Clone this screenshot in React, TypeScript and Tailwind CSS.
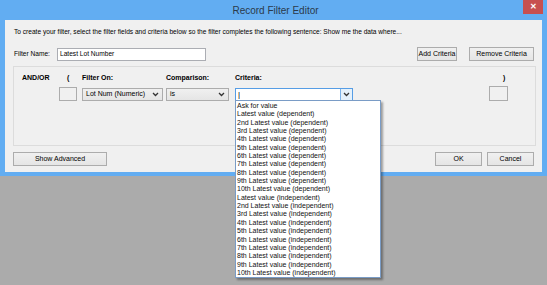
import React from "react";

const criteriaOptions = [
  "Ask for value",
  "Latest value (dependent)",
  "2nd Latest value (dependent)",
  "3rd Latest value (dependent)",
  "4th Latest value (dependent)",
  "5th Latest value (dependent)",
  "6th Latest value (dependent)",
  "7th Latest value (dependent)",
  "8th Latest value (dependent)",
  "9th Latest value (dependent)",
  "10th Latest value (dependent)",
  "Latest value (independent)",
  "2nd Latest value (independent)",
  "3rd Latest value (independent)",
  "4th Latest value (independent)",
  "5th Latest value (independent)",
  "6th Latest value (independent)",
  "7th Latest value (independent)",
  "8th Latest value (independent)",
  "9th Latest value (independent)",
  "10th Latest value (independent)",
];

function Chevron() {
  return (
    <svg width="7" height="5" viewBox="0 0 7 5" className="shrink-0">
      <polyline
        points="1,1 3.5,3.5 6,1"
        fill="none"
        stroke="#333"
        strokeWidth="1.3"
      />
    </svg>
  );
}

function Button({
  label,
  className = "",
}: {
  label: string;
  className?: string;
}) {
  return (
    <div
      className={`flex items-center justify-center border border-[#acacac] bg-gradient-to-b from-[#f0f0f0] to-[#e5e5e5] text-[7px] ${className}`}
    >
      {label}
    </div>
  );
}

function Select({ value, className = "" }: { value: string; className?: string }) {
  return (
    <div
      className={`flex h-[13px] items-center justify-between border border-[#acacac] bg-gradient-to-b from-[#f0f0f0] to-[#e5e5e5] pl-[3px] pr-[3px] text-[7px] ${className}`}
    >
      <span>{value}</span>
      <Chevron />
    </div>
  );
}

function FilterTable() {
  return (
    <div className="mr-[6px] mt-[5px] h-[80px] border border-[#dcdcdc]">
      <div className="grid grid-cols-[45px_23px_84px_69px_254px_1fr] pt-[6px] text-[7px] font-bold leading-[9px]">
        <span className="pl-[8px]">AND/OR</span>
        <span className="pl-[8px]">(</span>
        <span>Filter On:</span>
        <span>Comparison:</span>
        <span>Criteria:</span>
        <span className="pl-[14px]">)</span>
      </div>
      <div className="mt-[4px] grid grid-cols-[45px_23px_84px_69px_254px_1fr] items-end">
        <span />
        <div className="h-[14px] w-[18px] border border-[#acacac] bg-[#f0f0f0]" />
        <Select value="Lot Num (Numeric)" className="w-[81px]" />
        <Select value="is" className="w-[63px]" />
        <div className="flex h-[13px] w-[118px] items-stretch border border-[#569de5] bg-white">
          <span className="flex-1 pl-[2px] text-[8px] leading-[11px]">|</span>
          <div className="flex w-[12px] items-center justify-center border-l border-[#7eb4ea] bg-[#e5f1fb]">
            <Chevron />
          </div>
        </div>
        <div className="h-[15px] w-[19px] border border-[#acacac] bg-[#f0f0f0]" />
      </div>
    </div>
  );
}

function CriteriaList() {
  return (
    <div className="absolute left-[235px] top-[100px] w-[146px] border border-[#7a9cc6] bg-white pl-[1px] pt-[1px] shadow-[2px_2px_2px_rgba(0,0,0,0.35)]">
      {criteriaOptions.map((option) => (
        <div key={option} className="h-[8.35px] text-[7px] leading-[8.35px] text-[#111]">
          {option}
        </div>
      ))}
    </div>
  );
}

export default function App() {
  return (
    <div className="relative h-[285px] w-[547px] overflow-hidden bg-[#ababab] font-['Liberation_Sans',Arial,sans-serif] text-black">
      <div className="bg-[#62adf2] px-[5px] pb-[4px]">
        <div className="relative flex h-[20px] items-center justify-center">
          <span className="pl-[4px] text-[10px] text-[#2b3a4a]">Record Filter Editor</span>
          <div className="absolute right-[-1px] top-0 flex h-[14px] w-[20px] items-center justify-center bg-[#c75050] text-[8px] font-bold text-white">
            ✕
          </div>
        </div>
        <div className="h-[152px] bg-[#f0f0f0] pl-[8px]">
          <p className="pl-[1px] pt-[7px] text-[6.6px] leading-[9px]">
            To create your filter, select the filter fields and criteria below so the filter completes the following sentence: Show me the data where...
          </p>
          <div className="mt-[11px] flex items-center">
            <span className="w-[44px] pl-[1px] text-[6.6px]">Filter Name:</span>
            <div className="flex h-[13px] w-[149px] items-center border border-[#abadb3] bg-white pl-[2px] text-[6.6px]">
              Latest Lot Number
            </div>
            <div className="ml-auto mr-[8px] flex gap-[12px]">
              <Button label="Add Criteria" className="h-[14px] w-[40px]" />
              <Button label="Remove Criteria" className="h-[14px] w-[65px]" />
            </div>
          </div>
          <FilterTable />
          <div className="mt-[6px] flex">
            <Button label="Show Advanced" className="h-[14px] w-[94px]" />
            <div className="ml-auto mr-[8px] flex gap-[5px]">
              <Button label="OK" className="h-[14px] w-[47px] border-[#3399ff]" />
              <Button label="Cancel" className="h-[14px] w-[47px]" />
            </div>
          </div>
        </div>
      </div>
      <CriteriaList />
    </div>
  );
}
